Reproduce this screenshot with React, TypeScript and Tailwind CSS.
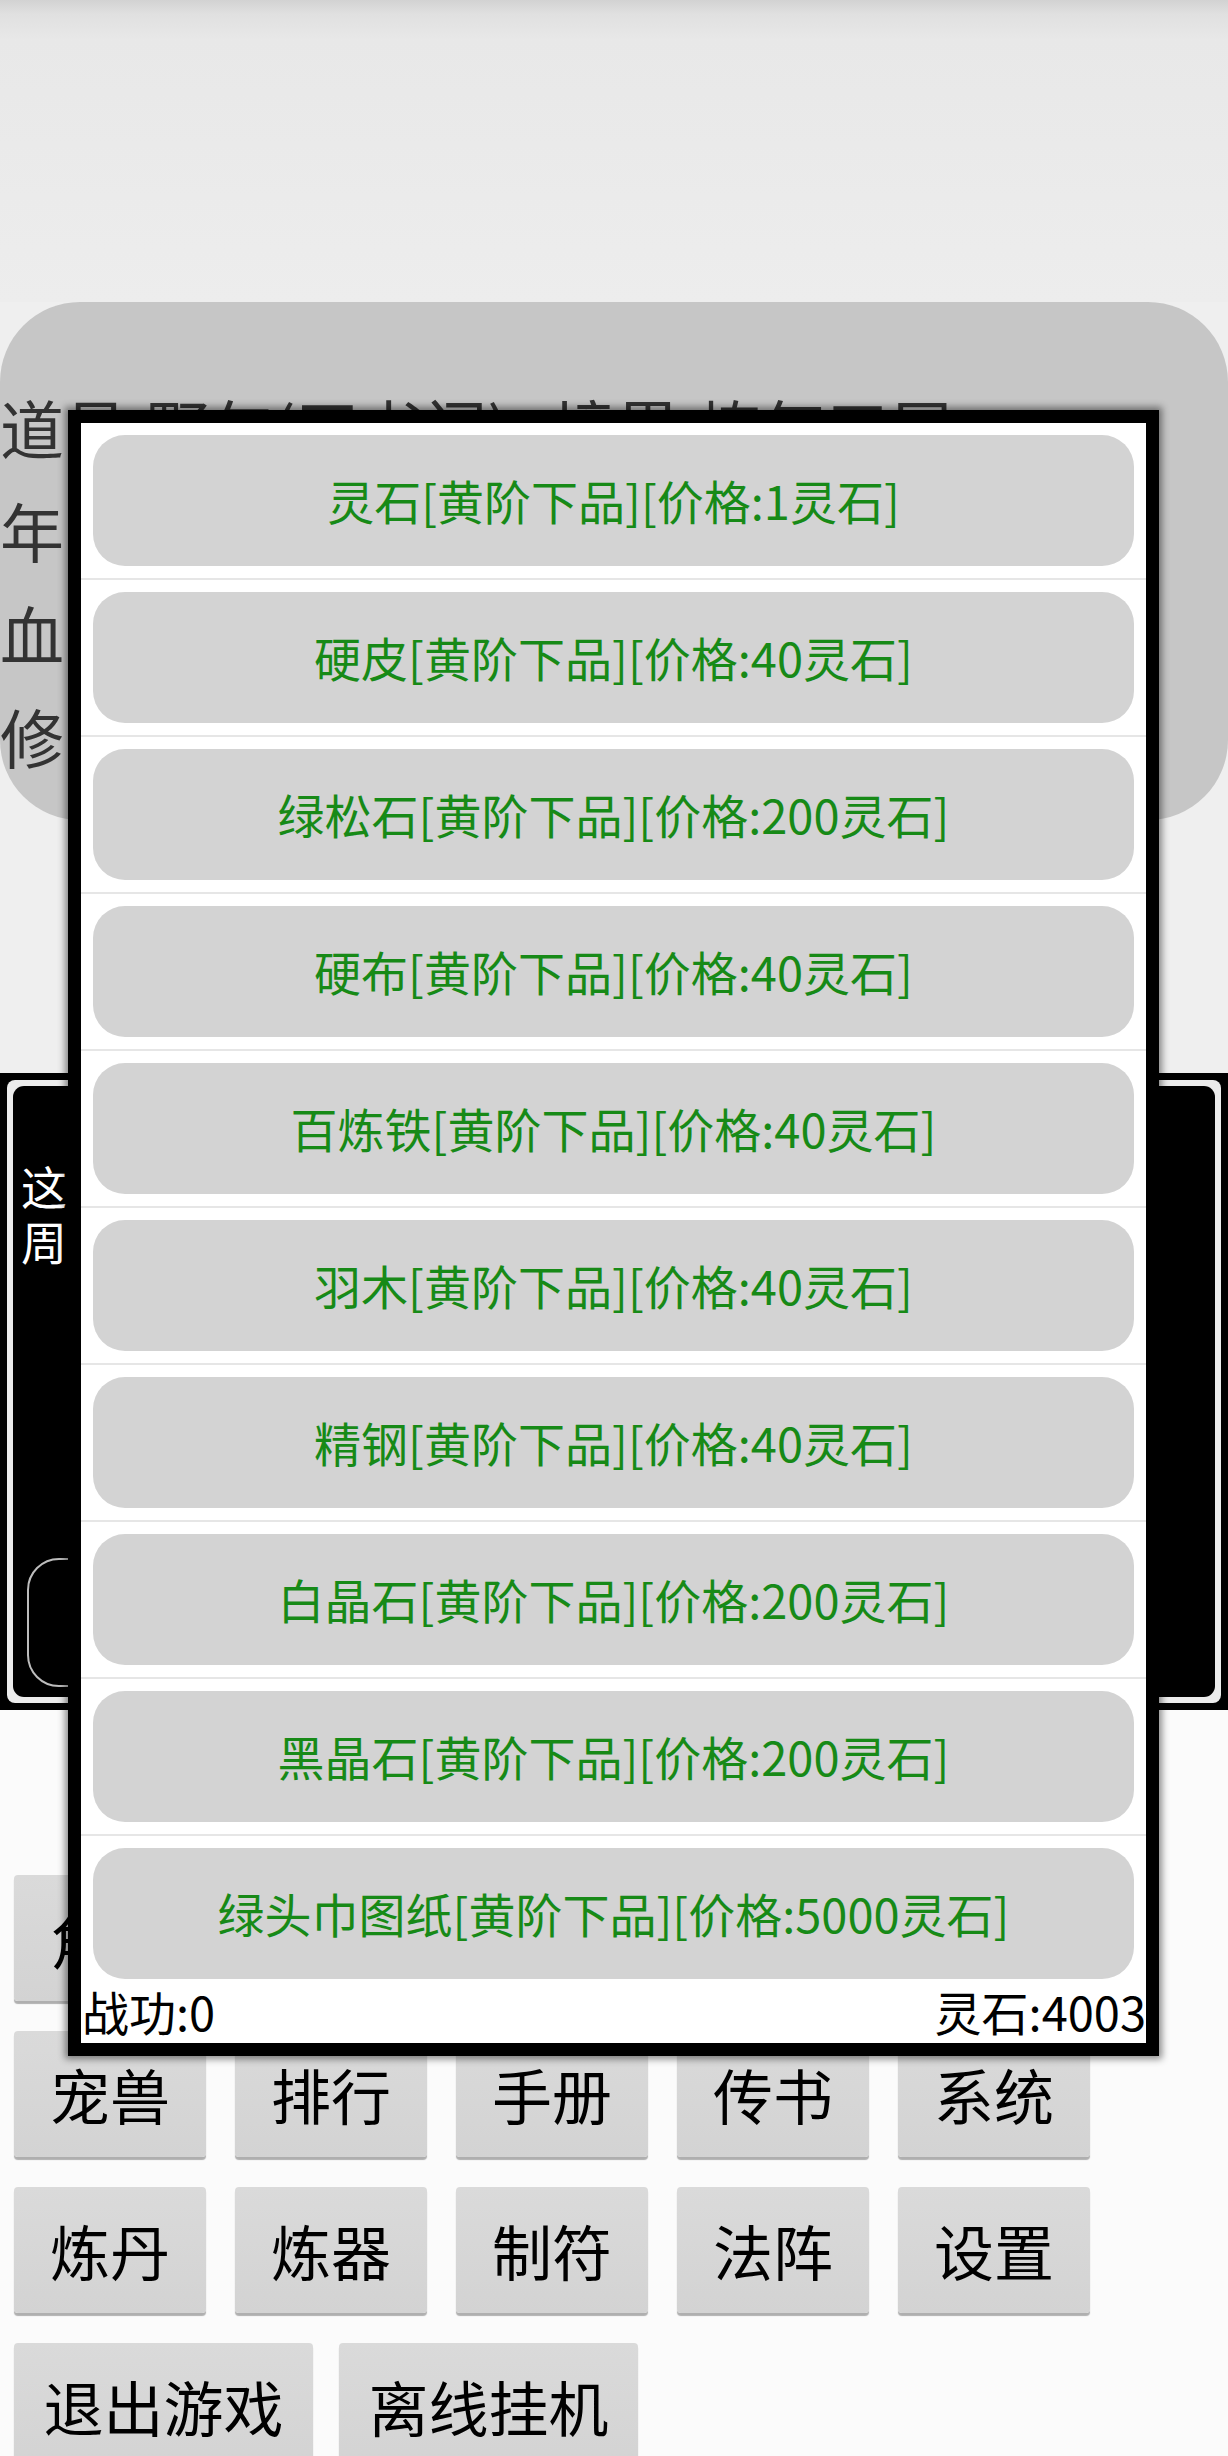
import React from "react";

const FONT = '"Noto Sans CJK SC", "Noto Sans", sans-serif';

const SHOP_ITEMS = [
  "灵石[黄阶下品][价格:1灵石]",
  "硬皮[黄阶下品][价格:40灵石]",
  "绿松石[黄阶下品][价格:200灵石]",
  "硬布[黄阶下品][价格:40灵石]",
  "百炼铁[黄阶下品][价格:40灵石]",
  "羽木[黄阶下品][价格:40灵石]",
  "精钢[黄阶下品][价格:40灵石]",
  "白晶石[黄阶下品][价格:200灵石]",
  "黑晶石[黄阶下品][价格:200灵石]",
  "绿头巾图纸[黄阶下品][价格:5000灵石]",
];

// first row sits under the shop dialog, only the left edge shows
const MENU_ROWS = [
  ["角色", "", "", "", ""],
  ["宠兽", "排行", "手册", "传书", "系统"],
  ["炼丹", "炼器", "制符", "法阵", "设置"],
];

function MenuButton({ label, wide }: { label: string; wide?: boolean }) {
  return (
    <button
      type="button"
      className={`flex h-[126px] items-center justify-center rounded-[4px] bg-[linear-gradient(to_bottom,#dadada,#d3d3d3)] text-[60px] leading-none text-black shadow-[0_3px_1px_rgba(0,0,0,0.3)] ${
        wide ? "w-[299px]" : "w-[192px]"
      }`}
    >
      {label}
    </button>
  );
}

function ShopDialog() {
  return (
    <div className="absolute left-[68px] top-[410px] flex h-[1646px] w-[1091px] flex-col border-[13px] border-black bg-white shadow-[0_0_7px_3px_rgba(0,0,0,0.45)]">
      <div className="flex flex-col">
        {SHOP_ITEMS.map((item, i) => (
          <div
            key={item}
            className={`px-[12px] pt-[12px] ${i < SHOP_ITEMS.length - 1 ? "border-b-2 border-[#e6e6e6] pb-[12px]" : ""}`}
          >
            <button
              type="button"
              className="flex h-[131px] w-full items-center justify-center rounded-[32px] bg-[#d3d3d3] text-[47px] text-[#178a17]"
            >
              {item}
            </button>
          </div>
        ))}
      </div>
      <div className="flex h-[64px] items-center justify-between pl-[1px] text-[47px] leading-[64px] text-black">
        <span>战功:0</span>
        <span>灵石:4003</span>
      </div>
    </div>
  );
}

export default function App() {
  return (
    <div className="relative h-[2456px] w-[1228px] overflow-hidden bg-[#fbfbfb]" style={{ fontFamily: FONT }}>
      <div className="bg-[#efefef]">
        <div className="h-[302px] bg-[linear-gradient(to_bottom,#d2d2d2_0px,#e0e0e0_14px,#e8e8e8_40px,#ededed_100%)]" />
        <div className="h-[518px] rounded-[80px] bg-[#c6c6c6] pt-[73px] text-[64px] leading-[103px] text-[#333333]">
          <p className="whitespace-pre">道号:野句(天书阁)   境界:炼气五层</p>
          <p>年</p>
          <p>血</p>
          <p>修</p>
        </div>
        <div className="h-[253px]" />
      </div>

      <div className="h-[637px] bg-black p-[7px]">
        <div className="h-full rounded-[8px] bg-[#ececec] p-[6px]">
          <div className="flex h-full flex-col rounded-[11px] bg-black px-[8px] pt-[72px]">
            <p className="w-[48px] break-all text-[46px] leading-[55px] text-white">这周</p>
            <div className="mt-auto mb-[10px] ml-[6px] h-[129px] w-[540px] rounded-[32px] border-2 border-[#bdbdbd]" />
          </div>
        </div>
      </div>

      <div className="flex flex-col gap-[30px] pl-[14px] pt-[165px]">
        {MENU_ROWS.map((row, r) => (
          <div key={r} className="flex gap-[29px]">
            {row.map((label, c) => (
              <MenuButton key={c} label={label} />
            ))}
          </div>
        ))}
        <div className="flex gap-[26px]">
          <MenuButton label="退出游戏" wide />
          <MenuButton label="离线挂机" wide />
        </div>
      </div>

      <ShopDialog />
    </div>
  );
}
